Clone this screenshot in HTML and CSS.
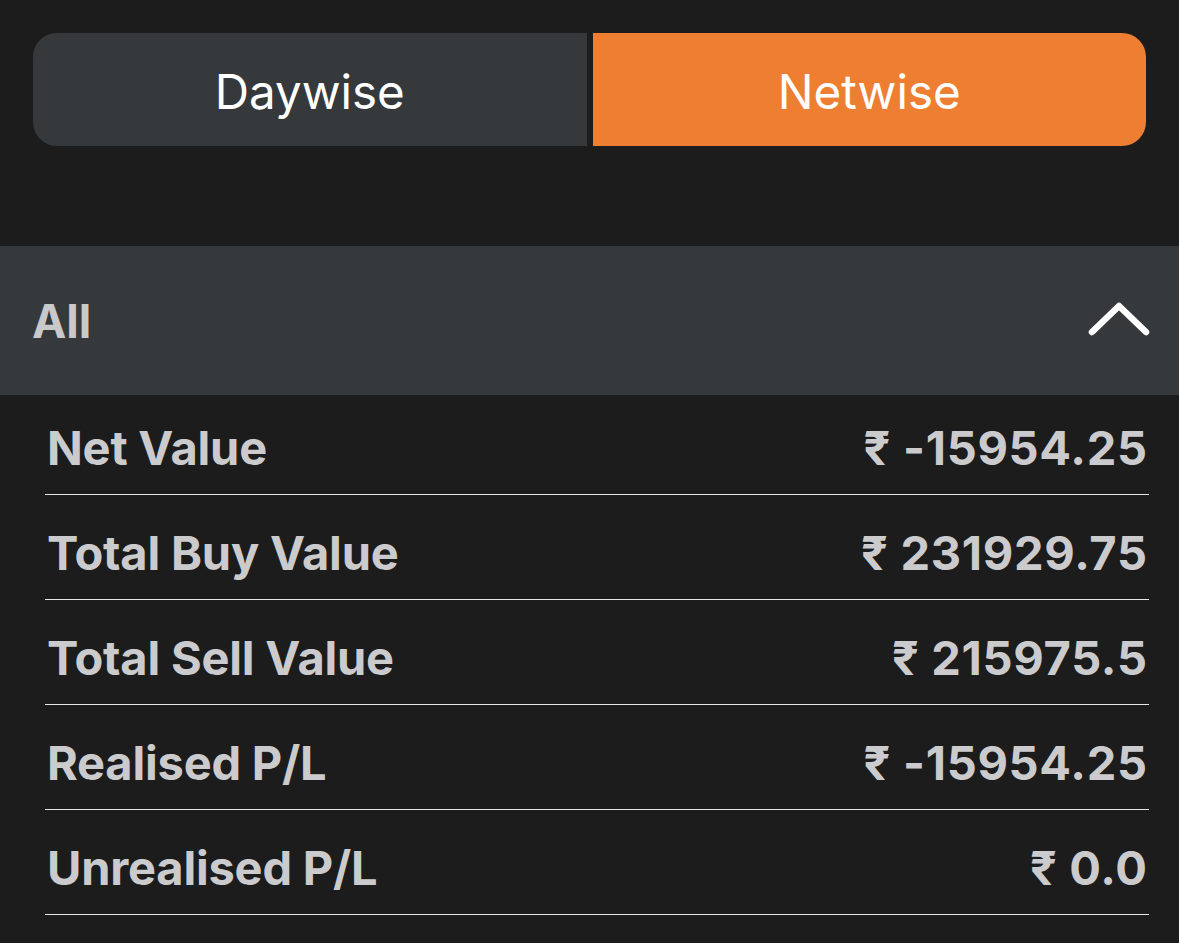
FILE: index.html
```html
<!DOCTYPE html>
<html>
<head>
<meta charset="utf-8">
<link rel="stylesheet" href="styles.css">
</head>
<body>
<div class="page">
  <div class="segmented">
    <div class="seg seg-left">Daywise</div>
    <div class="seg seg-right active">Netwise</div>
  </div>
  <div class="section-header">
    <span class="section-title">All</span>
    <svg class="chevron" width="62" height="36" viewBox="0 0 62 36">
      <polyline points="4,31 31,5 58,31" fill="none" stroke="#ffffff" stroke-width="6.5" stroke-linecap="round" stroke-linejoin="round"/>
    </svg>
  </div>
  <div class="rows">
    <div class="row first"><span class="label">Net Value</span><span class="value">₹ -15954.25</span></div>
    <div class="row"><span class="label">Total Buy Value</span><span class="value">₹ 231929.75</span></div>
    <div class="row"><span class="label">Total Sell Value</span><span class="value">₹ 215975.5</span></div>
    <div class="row"><span class="label">Realised P/L</span><span class="value">₹ -15954.25</span></div>
    <div class="row"><span class="label">Unrealised P/L</span><span class="value">₹ 0.0</span></div>
  </div>
</div>
</body>
</html>
```
FILE: styles.css
```css
html, body {
  margin: 0;
  padding: 0;
  background: #1c1c1d;
  height: 100%;
}
.page {
  font-family: Inter, "Noto Sans", "DejaVu Sans", sans-serif;
  width: 1179px;
  height: 943px;
  overflow: hidden;
  background: #1c1c1d;
}
.segmented {
  display: flex;
  gap: 6px;
  margin: 33px 33px 0 33px;
  height: 113px;
}
.seg {
  flex: 1;
  display: flex;
  align-items: center;
  justify-content: center;
  font-size: 47.5px;
  font-weight: 400;
  color: #ffffff;
  background: #36393c;
  padding-top: 3px;
}
.seg-left {
  border-radius: 24px 0 0 24px;
}
.seg-right {
  border-radius: 0 24px 24px 0;
}
.seg.active {
  background: #ee7e31;
}
.section-header {
  margin-top: 100px;
  height: 149px;
  background: #36393c;
  display: flex;
  align-items: center;
  justify-content: space-between;
  padding: 0 29px 0 32px;
}
.section-title {
  font-size: 46px;
  font-weight: 700;
  color: #c9c9cb;
}
.chevron {
  display: block;
  margin-top: -4px;
}
.rows {
  margin: 0 30px 0 45px;
}
.row {
  display: flex;
  justify-content: space-between;
  align-items: center;
  height: 105px;
  padding: 10px 2px 0 2px;
  box-sizing: border-box;
  border-bottom: 1px solid #e6e6e6;
  font-size: 47px;
  font-weight: 700;
  color: #cbcbcd;
}
.row.first {
  height: 100px;
  padding-top: 6px;
}
.label {
  letter-spacing: -0.2px;
}
.value {
  letter-spacing: 0.7px;
  margin-right: -0.7px;
}
```
